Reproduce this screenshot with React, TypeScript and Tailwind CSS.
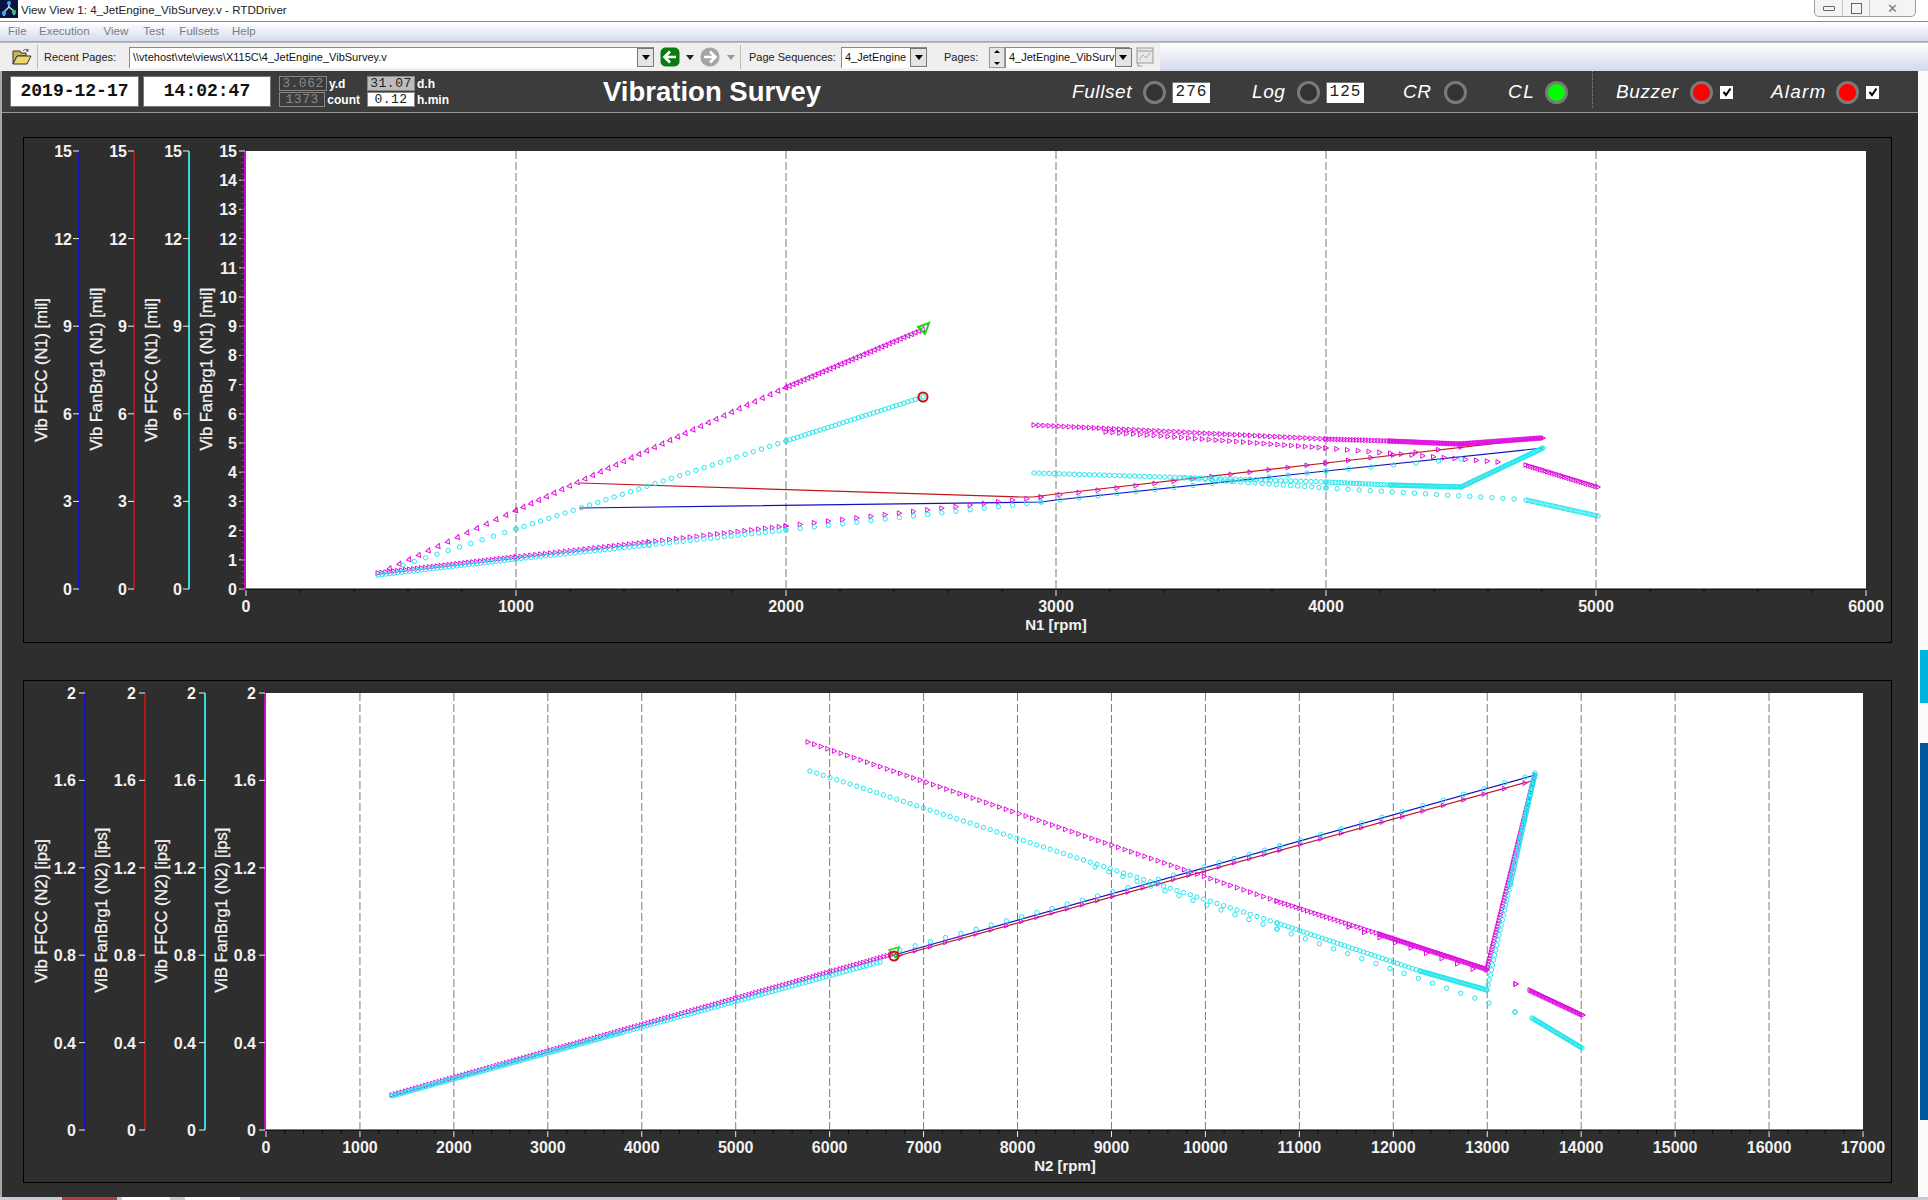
import { ReactNode } from "react"

type Pt = [number, number]
// [from, to, spacing in px]
type Seg = [Pt, Pt, number]

// Walk a segment and drop a marker every `step` px
const walk = (segs: Seg[]) => {
	const out: Pt[] = []
	segs.forEach(([a, b, step]) => {
		const len = Math.hypot(b[0] - a[0], b[1] - a[1])
		const n = Math.max(1, Math.round(len / step))
		for (let i = 0; i <= n; i++) {
			out.push([a[0] + ((b[0] - a[0]) * i) / n, a[1] + ((b[1] - a[1]) * i) / n])
		}
	})
	return out
}

const Triangles = ({ segs, rotate = 0 }: { segs: Seg[]; rotate?: number }) => (
	<g fill="none" stroke="#e010e0" strokeWidth="1">
		{walk(segs).map(([x, y], i) => (
			<path key={i} d="M-2 -2.4 L2.4 0 L-2 2.4 Z" transform={`translate(${x} ${y}) rotate(${rotate})`} />
		))}
	</g>
)

const Circles = ({ segs }: { segs: Seg[] }) => (
	<g fill="none" stroke="#22e6ee" strokeWidth="1">
		{walk(segs).map(([x, y], i) => (
			<circle key={i} cx={x} cy={y} r="2.2" />
		))}
	</g>
)

type AxisProps = {
	axisX: number
	color: string
	title: string
	titleX: number
	titleY: number
	gap: number
	ticks: { label: string; y: number }[]
}

const YAxis = ({ axisX, color, title, titleX, titleY, gap, ticks }: AxisProps) => (
	<g>
		<line x1={axisX} x2={axisX} y1={ticks[0].y} y2={ticks[ticks.length - 1].y} stroke={color} strokeWidth="2" />
		{ticks.map((t) => (
			<g key={t.label}>
				<line x1={axisX - 6} x2={axisX} y1={t.y} y2={t.y} stroke="#f0f0f0" />
				<text x={axisX - gap} y={t.y + 6} textAnchor="end" fill="#f2f2f2" className="text-[16px] font-bold">
					{t.label}
				</text>
			</g>
		))}
		<text
			x={titleX}
			y={titleY}
			textAnchor="middle"
			dominantBaseline="central"
			transform={`rotate(-90 ${titleX} ${titleY})`}
			fill="#f2f2f2"
			stroke="#f2f2f2"
			strokeWidth="0.3"
			className="text-[16.5px]"
		>
			{title}
		</text>
	</g>
)

type XAxisProps = {
	left: number
	right: number
	top: number
	bottom: number
	max: number
	labelY: number
	title: string
	titleX: number
	titleY: number
}

const PlotArea = ({ left, right, top, bottom, max, labelY, title, titleX, titleY }: XAxisProps) => {
	const scale = (right - left) / max
	const majors = Array.from({ length: max / 1000 + 1 }, (_, i) => i * 1000)
	const minors = Array.from({ length: max / 200 + 1 }, (_, i) => i * 200)
	return (
		<g>
			<rect x={left} y={top} width={right - left} height={bottom - top} fill="#fff" />
			{minors.map((m) => (
				<line key={m} x1={left + m * scale} x2={left + m * scale} y1={bottom} y2={bottom + 4} stroke="#0c0c0c" />
			))}
			<line x1={left} x2={right} y1={bottom} y2={bottom} stroke="#000" />
			{majors.map((m) => (
				<g key={m}>
					{m > 0 && m < max && (
						<line
							x1={left + m * scale}
							x2={left + m * scale}
							y1={top}
							y2={bottom}
							stroke="#7c7c7c"
							strokeDasharray="8 3"
						/>
					)}
					<line x1={left + m * scale} x2={left + m * scale} y1={bottom + 1} y2={bottom + 7} stroke="#f0f0f0" />
					<text x={left + m * scale} y={labelY} textAnchor="middle" fill="#f2f2f2" className="text-[16px] font-bold">
						{m}
					</text>
				</g>
			))}
			<text x={titleX} y={titleY} textAnchor="middle" fill="#f2f2f2" className="text-[15px] font-bold">
				{title}
			</text>
		</g>
	)
}

const n1Ticks = [15, 12, 9, 6, 3, 0].map((v) => ({ label: `${v}`, y: 589 - v * 29.2 }))
const n1AllTicks = Array.from({ length: 16 }, (_, i) => ({ label: `${15 - i}`, y: 589 - (15 - i) * 29.2 }))
const n2Ticks = ["2", "1.6", "1.2", "0.8", "0.4", "0"].map((v) => ({ label: v, y: 1130 - parseFloat(v) * 218.5 }))

const ChartN1 = () => (
	<svg width="1867" height="504" viewBox="24 138 1867 504" className="block">
		<PlotArea left={246} right={1866} top={151} bottom={589} max={6000} labelY={612} title="N1 [rpm]" titleX={1056} titleY={630} />
		<YAxis axisX={79} gap={7} color="#1414c4" title="Vib FFCC (N1) [mil]" titleX={41} titleY={370} ticks={n1Ticks} />
		<YAxis axisX={134} gap={7} color="#b01818" title="Vib FanBrg1 (N1) [mil]" titleX={96} titleY={369} ticks={n1Ticks} />
		<YAxis axisX={189} gap={7} color="#30dcd8" title="Vib FFCC (N1) [mil]" titleX={151} titleY={370} ticks={n1Ticks} />
		<YAxis axisX={245} gap={8} color="#c010c0" title="Vib FanBrg1 (N1) [mil]" titleX={206} titleY={369} ticks={n1AllTicks} />
		{Array.from({ length: 75 }, (_, i) => (
			<line key={i} x1={241} x2={245} y1={589 - i * 5.84} y2={589 - i * 5.84} stroke="#c010c0" />
		))}
		<polyline points="580,483 1020,497 1033,497 1056,494 1326,463 1543,438" fill="none" stroke="#c01818" strokeWidth="1.2" />
		<polyline points="580,508 1041,502 1056,500 1326,471 1543,448" fill="none" stroke="#1010c0" strokeWidth="1.2" />
		<Triangles
			rotate={-70}
			segs={[
				[[390, 568], [516, 510], 11],
				[[516, 510], [786, 387], 8.5],
				[[786, 387], [923, 329], 4],
			]}
		/>
		<Circles
			segs={[
				[[403, 565], [516, 529], 12],
				[[516, 529], [786, 441], 8.5],
				[[786, 441], [923, 397], 4],
			]}
		/>
		<Triangles
			segs={[
				[[378, 573], [516, 557], 4],
				[[516, 557], [649, 542], 5],
				[[649, 542], [786, 526], 7],
				[[786, 526], [1041, 497], 14.5],
				[[1041, 497], [1326, 463], 19],
				[[1326, 463], [1461, 447], 24],
				[[1034, 425], [1326, 439], 5],
				[[1326, 439], [1390, 441], 3],
				[[1390, 441], [1461, 444], 1.5],
				[[1461, 444], [1543, 438], 1.5],
				[[1106, 432], [1326, 448], 7],
				[[1326, 448], [1498, 462], 11],
				[[1526, 465], [1598, 487], 2.5],
			]}
		/>
		<Circles
			segs={[
				[[378, 575], [516, 559], 4],
				[[516, 559], [649, 545], 5],
				[[649, 545], [786, 530], 7],
				[[786, 530], [1041, 502], 14.5],
				[[1041, 502], [1326, 471], 19],
				[[1326, 471], [1461, 459], 24],
				[[1034, 473], [1326, 482], 5],
				[[1326, 482], [1390, 485], 3],
				[[1390, 485], [1461, 487], 1.5],
				[[1461, 487], [1543, 448], 1.5],
				[[1184, 478], [1326, 488], 7],
				[[1326, 488], [1514, 499], 11],
				[[1526, 500], [1598, 516], 2.5],
			]}
		/>
		<path d="M918 327 L929 323 L925 334 Z" fill="none" stroke="#18d818" strokeWidth="2" />
		<circle cx="923" cy="397" r="4.5" fill="none" stroke="#d01010" strokeWidth="2" />
	</svg>
)

const ChartN2 = () => (
	<svg width="1867" height="501" viewBox="24 681 1867 501" className="block">
		<PlotArea left={266} right={1863} top={693} bottom={1130} max={17000} labelY={1153} title="N2 [rpm]" titleX={1065} titleY={1171} />
		<YAxis axisX={85} gap={9} color="#1414c4" title="Vib FFCC (N2) [ips]" titleX={41} titleY={911} ticks={n2Ticks} />
		<YAxis axisX={145} gap={9} color="#b01818" title="ViB FanBrg1 (N2) [ips]" titleX={101} titleY={910} ticks={n2Ticks} />
		<YAxis axisX={205} gap={9} color="#30dcd8" title="Vib FFCC (N2) [ips]" titleX={161} titleY={911} ticks={n2Ticks} />
		<YAxis axisX={265} gap={9} color="#c010c0" title="ViB FanBrg1 (N2) [ips]" titleX={221} titleY={910} ticks={n2Ticks} />
		<line x1={894} y1={955} x2={1535} y2={775} stroke="#1010c0" strokeWidth="1.2" />
		<line x1={894} y1={957} x2={1535} y2={780} stroke="#c01818" strokeWidth="1.2" />
		<Triangles
			segs={[
				[[392, 1095], [894, 954], 3.5],
				[[900, 955], [1280, 850], 16],
				[[1280, 850], [1525, 783], 22],
				[[808, 742], [1277, 901], 7],
				[[1277, 901], [1380, 934], 4],
				[[1380, 934], [1487, 969], 1.5],
				[[1349, 927], [1473, 969], 16],
				[[1487, 970], [1535, 775], 3],
				[[1530, 990], [1583, 1015], 1.5],
				[[1516, 984], [1516, 984], 1],
			]}
		/>
		<Circles
			segs={[
				[[392, 1096], [620, 1033], 2.5],
				[[620, 1033], [880, 962], 3.5],
				[[900, 950], [1280, 846], 16],
				[[1280, 846], [1525, 777], 22],
				[[810, 771], [1277, 923], 7],
				[[1277, 923], [1420, 971], 4],
				[[1420, 971], [1487, 990], 1.5],
				[[1095, 867], [1277, 929], 15],
				[[1277, 929], [1489, 1003], 15],
				[[1487, 990], [1510, 885], 5],
				[[1510, 885], [1535, 773], 2],
				[[1532, 1018], [1582, 1048], 1.5],
				[[1515, 1012], [1515, 1012], 1],
			]}
		/>
		<path d="M889 950 L899 947 L896 958 Z" fill="none" stroke="#18d818" strokeWidth="1.5" />
		<circle cx="894" cy="956" r="4.5" fill="none" stroke="#d01010" strokeWidth="2" />
	</svg>
)

const Led = ({ color, className = "" }: { color: string; className?: string }) => (
	<div className={`w-[23px] h-[23px] rounded-full border-[3px] border-[#7a7a7a] shrink-0 ${color} ${className}`} />
)

const Label = ({ children, className = "" }: { children: ReactNode; className?: string }) => (
	<span className={`text-[19px] italic text-white tracking-[0.6px] whitespace-nowrap ${className}`}>{children}</span>
)

const CountBox = ({ children, className = "" }: { children: ReactNode; className?: string }) => (
	<div
		className={`w-[38px] h-[21px] bg-white border-t border-l border-[#777] text-[16px] leading-[19px] text-center tracking-[1px] text-[#222] font-['Liberation_Mono'] ${className}`}
	>
		{children}
	</div>
)

const Check = ({ className = "" }: { className?: string }) => (
	<div className={`w-[13px] h-[13px] bg-white shrink-0 flex items-center justify-center ${className}`}>
		<svg width="10" height="10" viewBox="0 0 10 10">
			<path d="M1.5 5 L4 8 L8.5 1.5" fill="none" stroke="#000" strokeWidth="2" />
		</svg>
	</div>
)

const Readout = ({ className, children }: { className: string; children: ReactNode }) => (
	<div
		className={`w-[48px] h-[15px] text-[13px] leading-[14px] text-center tracking-[0.5px] border border-[#888] font-['Liberation_Mono'] ${className}`}
	>
		{children}
	</div>
)

const Combo = ({ className, children }: { className: string; children: ReactNode }) => (
	<div className={`h-[21px] bg-white border-t border-l border-[#8a8a8a] flex items-center text-[11px] text-[#111] shrink-0 ${className}`}>
		<span className="flex-1 pl-[3px] whitespace-nowrap">{children}</span>
		<div className="w-[17px] h-[19px] bg-[#e4e4e4] border border-[#777] flex items-center justify-center shrink-0">
			<div className="w-0 h-0 border-x-[4px] border-x-transparent border-t-[5px] border-t-black" />
		</div>
	</div>
)

const ArrowButton = ({ bg, dir }: { bg: string; dir: "left" | "right" }) => (
	<svg width="20" height="20" viewBox="0 0 20 20" className="shrink-0">
		<rect x="0.5" y="0.5" width="19" height="19" rx={dir === "left" ? 5 : 9} fill={bg} />
		<path
			d={dir === "left" ? "M16 10 H6 M10 4.5 L4.5 10 L10 15.5" : "M4 10 H14 M10 4.5 L15.5 10 L10 15.5"}
			fill="none"
			stroke="#fff"
			strokeWidth="2.6"
		/>
	</svg>
)

const SmallCaret = ({ className = "" }: { className?: string }) => (
	<div className={`w-0 h-0 border-x-[4px] border-x-transparent border-t-[5px] shrink-0 ${className}`} />
)

const menu = [
	{ name: "File", cls: "ml-[8px]" },
	{ name: "Execution", cls: "ml-[12.5px]" },
	{ name: "View", cls: "ml-[14px]" },
	{ name: "Test", cls: "ml-[15px]" },
	{ name: "Fullsets", cls: "ml-[15px]" },
	{ name: "Help", cls: "ml-[13px]" },
]

export default function App() {
	return (
		<div className="w-[1928px] h-[1200px] bg-white overflow-hidden flex flex-col font-['Liberation_Sans',sans-serif]">
			{/* title bar */}
			<div className="h-[21px] flex items-start shrink-0">
				<svg width="18" height="18" viewBox="0 0 18 18" className="shrink-0">
					<rect width="18" height="18" fill="#0a1440" />
					<path d="M9 2 V7 M9 7 L4 12 M9 7 L14 11 M4 12 V16 M14 11 V15" fill="none" stroke="#d8e4ff" strokeWidth="1.4" />
					<circle cx="9" cy="3" r="2" fill="#30b0f0" />
					<circle cx="4" cy="13" r="2.2" fill="#30b0f0" />
					<circle cx="14" cy="12" r="2.2" fill="#30c080" />
				</svg>
				<span className="ml-[3px] mt-[3px] text-[11.6px] leading-[14px] text-[#222] whitespace-nowrap">
					View View 1: 4_JetEngine_VibSurvey.v - RTDDriver
				</span>
				<div className="ml-auto mr-[12px] w-[102px] h-[17px] bg-[#f4f4f4] border-x border-b border-[#a0a0a0] rounded-b-[5px] flex">
					<div className="w-[28px] border-r border-[#c8c8c8] flex items-center justify-center">
						<div className="w-[12px] h-[5px] border border-[#666] rounded-[1px]" />
					</div>
					<div className="w-[27px] border-r border-[#c8c8c8] flex items-center justify-center">
						<div className="w-[11px] h-[11px] border border-[#666]" />
					</div>
					<div className="flex-1 flex items-center justify-center text-[13px] leading-[13px] text-[#777]">✕</div>
				</div>
			</div>

			{/* menu bar */}
			<div className="h-[21px] border-t border-[#8a8a8a] border-b-[1px] border-b-[#aaa] bg-gradient-to-b from-white to-[#d6dcee] flex items-center shrink-0">
				{menu.map((m) => (
					<span key={m.name} className={`text-[11.5px] text-[#7b7b7b] ${m.cls}`}>
						{m.name}
					</span>
				))}
			</div>

			{/* tool bar */}
			<div className="h-[29px] flex bg-gradient-to-b from-white to-[#d2d9ec] shrink-0 border-t border-[#bbb]">
				<div className="w-[1160px] h-full bg-[#efefef] flex items-center shrink-0">
					<svg width="20" height="18" viewBox="0 0 20 18" className="ml-[12px] shrink-0">
						<path d="M1 3 H8 L9 5 H14 V8 H5 L1 16 Z" fill="#c9b552" stroke="#333" />
						<path d="M5 8 H19 L15 16 H1 Z" fill="#ead873" stroke="#333" />
						<path d="M11 3 C12 1 15 1 16 3 M16 3 L14 3 M16 3 L16 1" fill="none" stroke="#444" />
					</svg>
					<div className="ml-[5px] w-px h-[24px] bg-[#bbb]" />
					<span className="ml-[6px] w-[85px] text-[11px] text-[#222] whitespace-nowrap">Recent Pages:</span>
					<Combo className="w-[525px]">\\vtehost\vte\views\X115C\4_JetEngine_VibSurvey.v</Combo>
					<div className="ml-[6px]">
						<ArrowButton bg="#0c7a12" dir="left" />
					</div>
					<SmallCaret className="ml-[6px] border-t-[#222]" />
					<div className="ml-[6px]">
						<ArrowButton bg="#a4a4a4" dir="right" />
					</div>
					<SmallCaret className="ml-[7px] border-t-[#999]" />
					<div className="ml-[5px] w-px h-[24px] bg-[#bbb]" />
					<span className="ml-[8px] w-[92px] text-[11px] text-[#222] whitespace-nowrap">Page Sequences:</span>
					<Combo className="w-[86px]">4_JetEngine</Combo>
					<span className="ml-[17px] w-[45px] text-[11px] text-[#222]">Pages:</span>
					<div className="w-[16px] h-[21px] flex flex-col shrink-0 items-center justify-between bg-[#e6e6e6] border border-[#999]">
						<div className="w-0 h-0 mt-[2px] border-x-[3px] border-x-transparent border-b-[3px] border-b-black" />
						<div className="w-0 h-0 mb-[2px] border-x-[3px] border-x-transparent border-t-[3px] border-t-black" />
					</div>
					<Combo className="w-[125px]">4_JetEngine_VibSurv</Combo>
					<svg width="18" height="20" viewBox="0 0 18 20" className="ml-[6px] shrink-0">
						<rect x="1" y="1" width="16" height="15" fill="#e8e8e8" stroke="#999" />
						<path d="M1 4 H17" stroke="#999" />
						<path d="M3 13 L7 8 L10 11 L14 6" fill="none" stroke="#aaa" />
						<path d="M2 16 V19 H6" fill="none" stroke="#999" />
					</svg>
				</div>
			</div>

			{/* dark body with the strip on the right */}
			<div className="flex-1 flex min-h-0">
				<div className="w-[2px] bg-[#a8a8a8] shrink-0" />
				<div className="w-[1916px] flex flex-col shrink-0 bg-[#2e2e2e]">
					{/* status header */}
					<div className="h-[42px] bg-[#3c3c3c] border-b border-[#999] flex items-start shrink-0 pt-[5px]">
						<div className="ml-[8px] w-[129px] h-[31px] bg-white border border-[#777] flex items-center justify-center font-['Liberation_Mono'] font-bold text-[18px] text-[#111]">
							2019-12-17
						</div>
						<div className="ml-[4px] w-[128px] h-[31px] bg-white border border-[#777] flex items-center justify-center font-['Liberation_Mono'] font-bold text-[18px] text-[#111]">
							14:02:47
						</div>
						<div className="ml-[8px] w-[81px] flex flex-col gap-[1px]">
							<div className="flex items-center">
								<Readout className="bg-[#3c3c3c] text-[#8a8a8a]">3.062</Readout>
								<span className="ml-[2px] text-[12px] leading-[14px] font-bold text-white">y.d</span>
							</div>
							<div className="flex items-center">
								<Readout className="bg-[#3c3c3c] text-[#8a8a8a]">1373</Readout>
								<span className="ml-[2px] text-[12px] leading-[14px] font-bold text-white">count</span>
							</div>
						</div>
						<div className="ml-[7px] w-[82px] flex flex-col gap-[1px]">
							<div className="flex items-center">
								<Readout className="bg-[#bcbcbc] text-[#222]">31.07</Readout>
								<span className="ml-[2px] text-[12px] leading-[14px] font-bold text-white">d.h</span>
							</div>
							<div className="flex items-center">
								<Readout className="bg-white text-[#222]">0.12</Readout>
								<span className="ml-[2px] text-[12px] leading-[14px] font-bold text-white">h.min</span>
							</div>
						</div>
						<h1 className="ml-[154px] w-[240px] h-[32px] text-[27.5px] leading-[32px] font-bold text-white whitespace-nowrap">
							Vibration Survey
						</h1>
						<div className="ml-[229px] flex items-center h-[32px]">
							<Label className="w-[71px]">Fullset</Label>
							<Led color="bg-[#333]" />
							<CountBox className="ml-[6px]">276</CountBox>
							<Label className="ml-[42px] w-[45px]">Log</Label>
							<Led color="bg-[#333]" />
							<CountBox className="ml-[6px]">125</CountBox>
							<Label className="ml-[39px] w-[41px]">CR</Label>
							<Led color="bg-[#333]" />
							<Label className="ml-[41px] w-[37px] tracking-[1.5px]">CL</Label>
							<Led color="bg-[#00ff00]" />
						</div>
						<div className="ml-[24px] w-0 h-[37px] -mt-[5px] border-l border-dotted border-[#888]" />
						<div className="ml-[23px] flex items-center h-[32px]">
							<Label className="w-[74px]">Buzzer</Label>
							<Led color="bg-[#ff0000]" />
							<Check className="ml-[7px]" />
							<Label className="ml-[38px] w-[65px] tracking-[1.2px]">Alarm</Label>
							<Led color="bg-[#ff0000]" />
							<Check className="ml-[7px]" />
						</div>
					</div>

					{/* charts */}
					<div className="ml-[21px] mt-[24px] w-[1869px] h-[506px] border border-black shrink-0">
						<ChartN1 />
					</div>
					<div className="ml-[21px] mt-[37px] w-[1869px] h-[503px] border border-black shrink-0">
						<ChartN2 />
					</div>
				</div>

				{/* edge of the window behind */}
				<div className="flex-1 bg-[#fbfbfb] flex flex-col pl-[2px]">
					<div className="mt-[579px] h-[53px] bg-[#00b4e0]" />
					<div className="mt-[40px] h-[377px] bg-[#00579c]" />
				</div>
			</div>

			{/* taskbar sliver */}
			<div className="h-[3px] bg-[#c4ccd8] flex shrink-0">
				<div className="ml-[62px] w-[55px] bg-[#b04040]" />
				<div className="ml-[5px] w-[48px] bg-white" />
				<div className="ml-[15px] w-[55px] bg-white" />
			</div>
		</div>
	)
}
